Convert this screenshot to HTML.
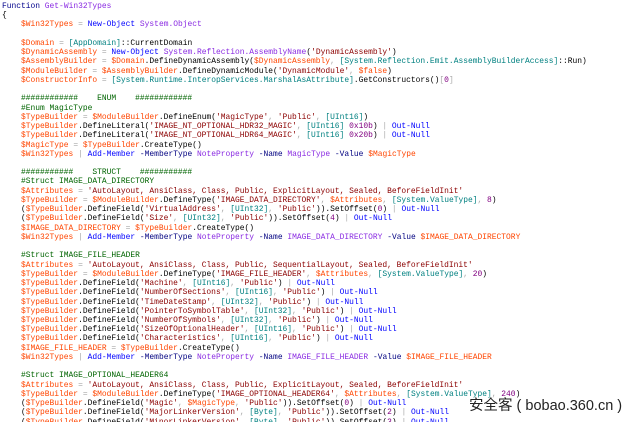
<!DOCTYPE html>
<html><head><meta charset="utf-8"><style>
html,body{margin:0;padding:0;background:#fff;width:640px;height:422px;overflow:hidden;position:relative}
pre{margin:0;position:absolute;left:2px;top:2px;font-family:"Liberation Mono",monospace;font-size:7.93px;line-height:9.23px;color:#000;white-space:pre}
.v{color:#ff4500}.c{color:#0000ff}.a{color:#8a2be2}.t{color:#008080}.s{color:#8b0000}.k{color:#00008b}.m{color:#006400}.o{color:#a9a9a9}.n{color:#800080}.p{color:#000080}
.wm{position:absolute;left:469px;top:394px;font-family:"Liberation Sans","Noto Sans CJK SC",sans-serif;font-size:14.5px;color:#222;text-shadow:0 0 2px #fff,0 0 2px #fff;white-space:nowrap}
</style></head><body>
<pre><span class="k">Function</span> <span class="a">Get-Win32Types</span>
{
    <span class="v">$Win32Types</span> <span class="o">=</span> <span class="c">New-Object</span> <span class="a">System.Object</span>

    <span class="v">$Domain</span> <span class="o">=</span> <span class="t">[AppDomain]</span>::CurrentDomain
    <span class="v">$DynamicAssembly</span> <span class="o">=</span> <span class="c">New-Object</span> <span class="a">System.Reflection.AssemblyName</span>(<span class="s">'DynamicAssembly'</span>)
    <span class="v">$AssemblyBuilder</span> <span class="o">=</span> <span class="v">$Domain</span>.DefineDynamicAssembly(<span class="v">$DynamicAssembly</span><span class="o">,</span> <span class="t">[System.Reflection.Emit.AssemblyBuilderAccess]</span>::Run)
    <span class="v">$ModuleBuilder</span> <span class="o">=</span> <span class="v">$AssemblyBuilder</span>.DefineDynamicModule(<span class="s">'DynamicModule'</span><span class="o">,</span> <span class="v">$false</span>)
    <span class="v">$ConstructorInfo</span> <span class="o">=</span> <span class="t">[System.Runtime.InteropServices.MarshalAsAttribute]</span>.GetConstructors()<span class="o">[</span><span class="n">0</span><span class="o">]</span>

    <span class="m">############    ENUM    ############</span>
    <span class="m">#Enum MagicType</span>
    <span class="v">$TypeBuilder</span> <span class="o">=</span> <span class="v">$ModuleBuilder</span>.DefineEnum(<span class="s">'MagicType'</span><span class="o">,</span> <span class="s">'Public'</span><span class="o">,</span> <span class="t">[UInt16]</span>)
    <span class="v">$TypeBuilder</span>.DefineLiteral(<span class="s">'IMAGE_NT_OPTIONAL_HDR32_MAGIC'</span><span class="o">,</span> <span class="t">[UInt16]</span> <span class="n">0x10b</span>) <span class="o">|</span> <span class="c">Out-Null</span>
    <span class="v">$TypeBuilder</span>.DefineLiteral(<span class="s">'IMAGE_NT_OPTIONAL_HDR64_MAGIC'</span><span class="o">,</span> <span class="t">[UInt16]</span> <span class="n">0x20b</span>) <span class="o">|</span> <span class="c">Out-Null</span>
    <span class="v">$MagicType</span> <span class="o">=</span> <span class="v">$TypeBuilder</span>.CreateType()
    <span class="v">$Win32Types</span> <span class="o">|</span> <span class="c">Add-Member</span> <span class="p">-MemberType</span> <span class="a">NoteProperty</span> <span class="p">-Name</span> <span class="a">MagicType</span> <span class="p">-Value</span> <span class="v">$MagicType</span>

    <span class="m">###########    STRUCT    ###########</span>
    <span class="m">#Struct IMAGE_DATA_DIRECTORY</span>
    <span class="v">$Attributes</span> <span class="o">=</span> <span class="s">'AutoLayout, AnsiClass, Class, Public, ExplicitLayout, Sealed, BeforeFieldInit'</span>
    <span class="v">$TypeBuilder</span> <span class="o">=</span> <span class="v">$ModuleBuilder</span>.DefineType(<span class="s">'IMAGE_DATA_DIRECTORY'</span><span class="o">,</span> <span class="v">$Attributes</span><span class="o">,</span> <span class="t">[System.ValueType]</span><span class="o">,</span> <span class="n">8</span>)
    (<span class="v">$TypeBuilder</span>.DefineField(<span class="s">'VirtualAddress'</span><span class="o">,</span> <span class="t">[UInt32]</span><span class="o">,</span> <span class="s">'Public'</span>)).SetOffset(<span class="n">0</span>) <span class="o">|</span> <span class="c">Out-Null</span>
    (<span class="v">$TypeBuilder</span>.DefineField(<span class="s">'Size'</span><span class="o">,</span> <span class="t">[UInt32]</span><span class="o">,</span> <span class="s">'Public'</span>)).SetOffset(<span class="n">4</span>) <span class="o">|</span> <span class="c">Out-Null</span>
    <span class="v">$IMAGE_DATA_DIRECTORY</span> <span class="o">=</span> <span class="v">$TypeBuilder</span>.CreateType()
    <span class="v">$Win32Types</span> <span class="o">|</span> <span class="c">Add-Member</span> <span class="p">-MemberType</span> <span class="a">NoteProperty</span> <span class="p">-Name</span> <span class="a">IMAGE_DATA_DIRECTORY</span> <span class="p">-Value</span> <span class="v">$IMAGE_DATA_DIRECTORY</span>

    <span class="m">#Struct IMAGE_FILE_HEADER</span>
    <span class="v">$Attributes</span> <span class="o">=</span> <span class="s">'AutoLayout, AnsiClass, Class, Public, SequentialLayout, Sealed, BeforeFieldInit'</span>
    <span class="v">$TypeBuilder</span> <span class="o">=</span> <span class="v">$ModuleBuilder</span>.DefineType(<span class="s">'IMAGE_FILE_HEADER'</span><span class="o">,</span> <span class="v">$Attributes</span><span class="o">,</span> <span class="t">[System.ValueType]</span><span class="o">,</span> <span class="n">20</span>)
    <span class="v">$TypeBuilder</span>.DefineField(<span class="s">'Machine'</span><span class="o">,</span> <span class="t">[UInt16]</span><span class="o">,</span> <span class="s">'Public'</span>) <span class="o">|</span> <span class="c">Out-Null</span>
    <span class="v">$TypeBuilder</span>.DefineField(<span class="s">'NumberOfSections'</span><span class="o">,</span> <span class="t">[UInt16]</span><span class="o">,</span> <span class="s">'Public'</span>) <span class="o">|</span> <span class="c">Out-Null</span>
    <span class="v">$TypeBuilder</span>.DefineField(<span class="s">'TimeDateStamp'</span><span class="o">,</span> <span class="t">[UInt32]</span><span class="o">,</span> <span class="s">'Public'</span>) <span class="o">|</span> <span class="c">Out-Null</span>
    <span class="v">$TypeBuilder</span>.DefineField(<span class="s">'PointerToSymbolTable'</span><span class="o">,</span> <span class="t">[UInt32]</span><span class="o">,</span> <span class="s">'Public'</span>) <span class="o">|</span> <span class="c">Out-Null</span>
    <span class="v">$TypeBuilder</span>.DefineField(<span class="s">'NumberOfSymbols'</span><span class="o">,</span> <span class="t">[UInt32]</span><span class="o">,</span> <span class="s">'Public'</span>) <span class="o">|</span> <span class="c">Out-Null</span>
    <span class="v">$TypeBuilder</span>.DefineField(<span class="s">'SizeOfOptionalHeader'</span><span class="o">,</span> <span class="t">[UInt16]</span><span class="o">,</span> <span class="s">'Public'</span>) <span class="o">|</span> <span class="c">Out-Null</span>
    <span class="v">$TypeBuilder</span>.DefineField(<span class="s">'Characteristics'</span><span class="o">,</span> <span class="t">[UInt16]</span><span class="o">,</span> <span class="s">'Public'</span>) <span class="o">|</span> <span class="c">Out-Null</span>
    <span class="v">$IMAGE_FILE_HEADER</span> <span class="o">=</span> <span class="v">$TypeBuilder</span>.CreateType()
    <span class="v">$Win32Types</span> <span class="o">|</span> <span class="c">Add-Member</span> <span class="p">-MemberType</span> <span class="a">NoteProperty</span> <span class="p">-Name</span> <span class="a">IMAGE_FILE_HEADER</span> <span class="p">-Value</span> <span class="v">$IMAGE_FILE_HEADER</span>

    <span class="m">#Struct IMAGE_OPTIONAL_HEADER64</span>
    <span class="v">$Attributes</span> <span class="o">=</span> <span class="s">'AutoLayout, AnsiClass, Class, Public, ExplicitLayout, Sealed, BeforeFieldInit'</span>
    <span class="v">$TypeBuilder</span> <span class="o">=</span> <span class="v">$ModuleBuilder</span>.DefineType(<span class="s">'IMAGE_OPTIONAL_HEADER64'</span><span class="o">,</span> <span class="v">$Attributes</span><span class="o">,</span> <span class="t">[System.ValueType]</span><span class="o">,</span> <span class="n">240</span>)
    (<span class="v">$TypeBuilder</span>.DefineField(<span class="s">'Magic'</span><span class="o">,</span> <span class="v">$MagicType</span><span class="o">,</span> <span class="s">'Public'</span>)).SetOffset(<span class="n">0</span>) <span class="o">|</span> <span class="c">Out-Null</span>
    (<span class="v">$TypeBuilder</span>.DefineField(<span class="s">'MajorLinkerVersion'</span><span class="o">,</span> <span class="t">[Byte]</span><span class="o">,</span> <span class="s">'Public'</span>)).SetOffset(<span class="n">2</span>) <span class="o">|</span> <span class="c">Out-Null</span>
    (<span class="v">$TypeBuilder</span>.DefineField(<span class="s">'MinorLinkerVersion'</span><span class="o">,</span> <span class="t">[Byte]</span><span class="o">,</span> <span class="s">'Public'</span>)).SetOffset(<span class="n">3</span>) <span class="o">|</span> <span class="c">Out-Null</span></pre>
<div class="wm">安全客 ( bobao.360.cn )</div>
</body></html>
